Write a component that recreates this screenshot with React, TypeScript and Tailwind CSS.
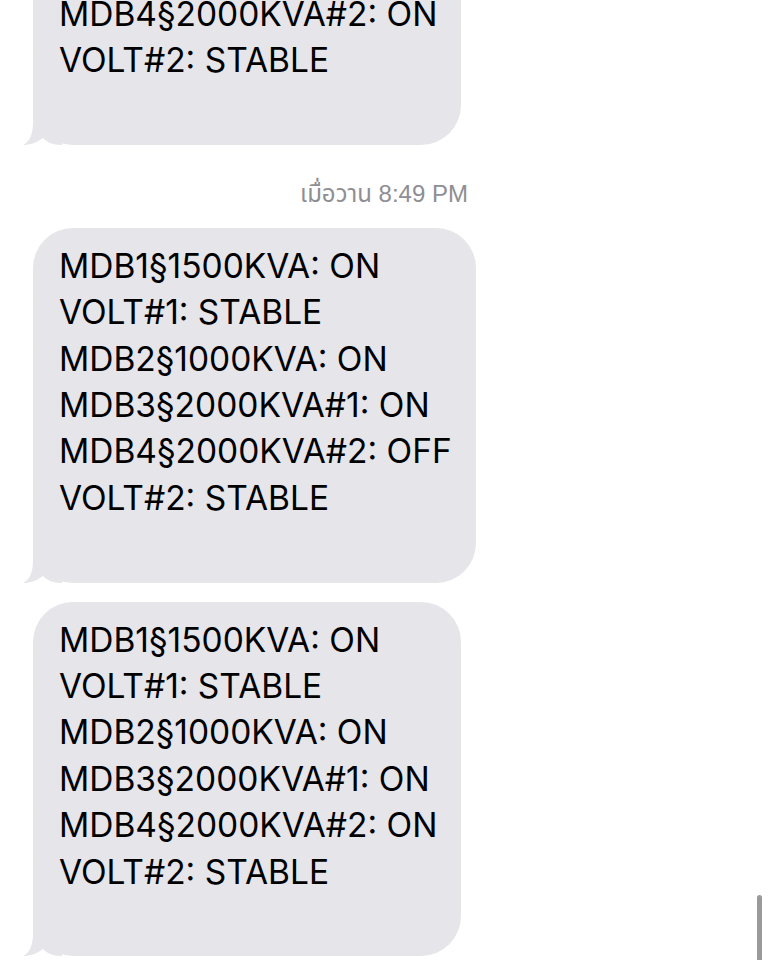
import React from "react";

const Tail = () => (
  <svg
    className="absolute left-[-11px] bottom-0"
    width="40"
    height="40"
    viewBox="0 0 40 40"
  >
    <path
      d="M11 0 L11 18 C11 30 7 37 1 40 C8 40 14 38 21 33 C25 37 30 40 40 40 L40 0 Z"
      fill="#e5e5ea"
    />
  </svg>
);

const Bubble = ({ lines }: { lines: string[] }) => (
  <div className="relative rounded-[40px] bg-[#e5e5ea] pl-[26px] pr-[24px] py-[15px] text-[33.5px] leading-[46.4px] text-black whitespace-pre font-['Inter','Liberation_Sans',sans-serif]">
    {lines.map((l, i) => (
      <div key={i} className="relative">
        {l}
      </div>
    ))}
    <div className="h-[46.4px]" />
    <Tail />
  </div>
);

const onLines = [
  "MDB1§1500KVA: ON",
  "VOLT#1: STABLE",
  "MDB2§1000KVA: ON",
  "MDB3§2000KVA#1: ON",
  "MDB4§2000KVA#2: ON",
  "VOLT#2: STABLE",
];

const offLines = [
  "MDB1§1500KVA: ON",
  "VOLT#1: STABLE",
  "MDB2§1000KVA: ON",
  "MDB3§2000KVA#1: ON",
  "MDB4§2000KVA#2: OFF",
  "VOLT#2: STABLE",
];

export default function App() {
  return (
    <div className="relative w-[768px] h-[960px] overflow-hidden bg-white">
      <div className="mt-[-210px] flex flex-col items-start pl-[33px]">
        <Bubble lines={onLines} />
        <div className="self-stretch mt-[35px] pr-[33px] text-center text-[24px] leading-[28px] text-[#8e8e93] font-['Liberation_Sans','Noto_Sans_Thai','Noto_Sans',sans-serif]">
          <span>เมื่อวาน</span> 8:49 PM
        </div>
        <div className="mt-[20px]">
          <Bubble lines={offLines} />
        </div>
        <div className="mt-[19px]">
          <Bubble lines={onLines} />
        </div>
      </div>
      <div className="absolute right-[6px] top-[895px] h-[80px] w-[5px] rounded-full bg-[#9a9a9a]" />
    </div>
  );
}
